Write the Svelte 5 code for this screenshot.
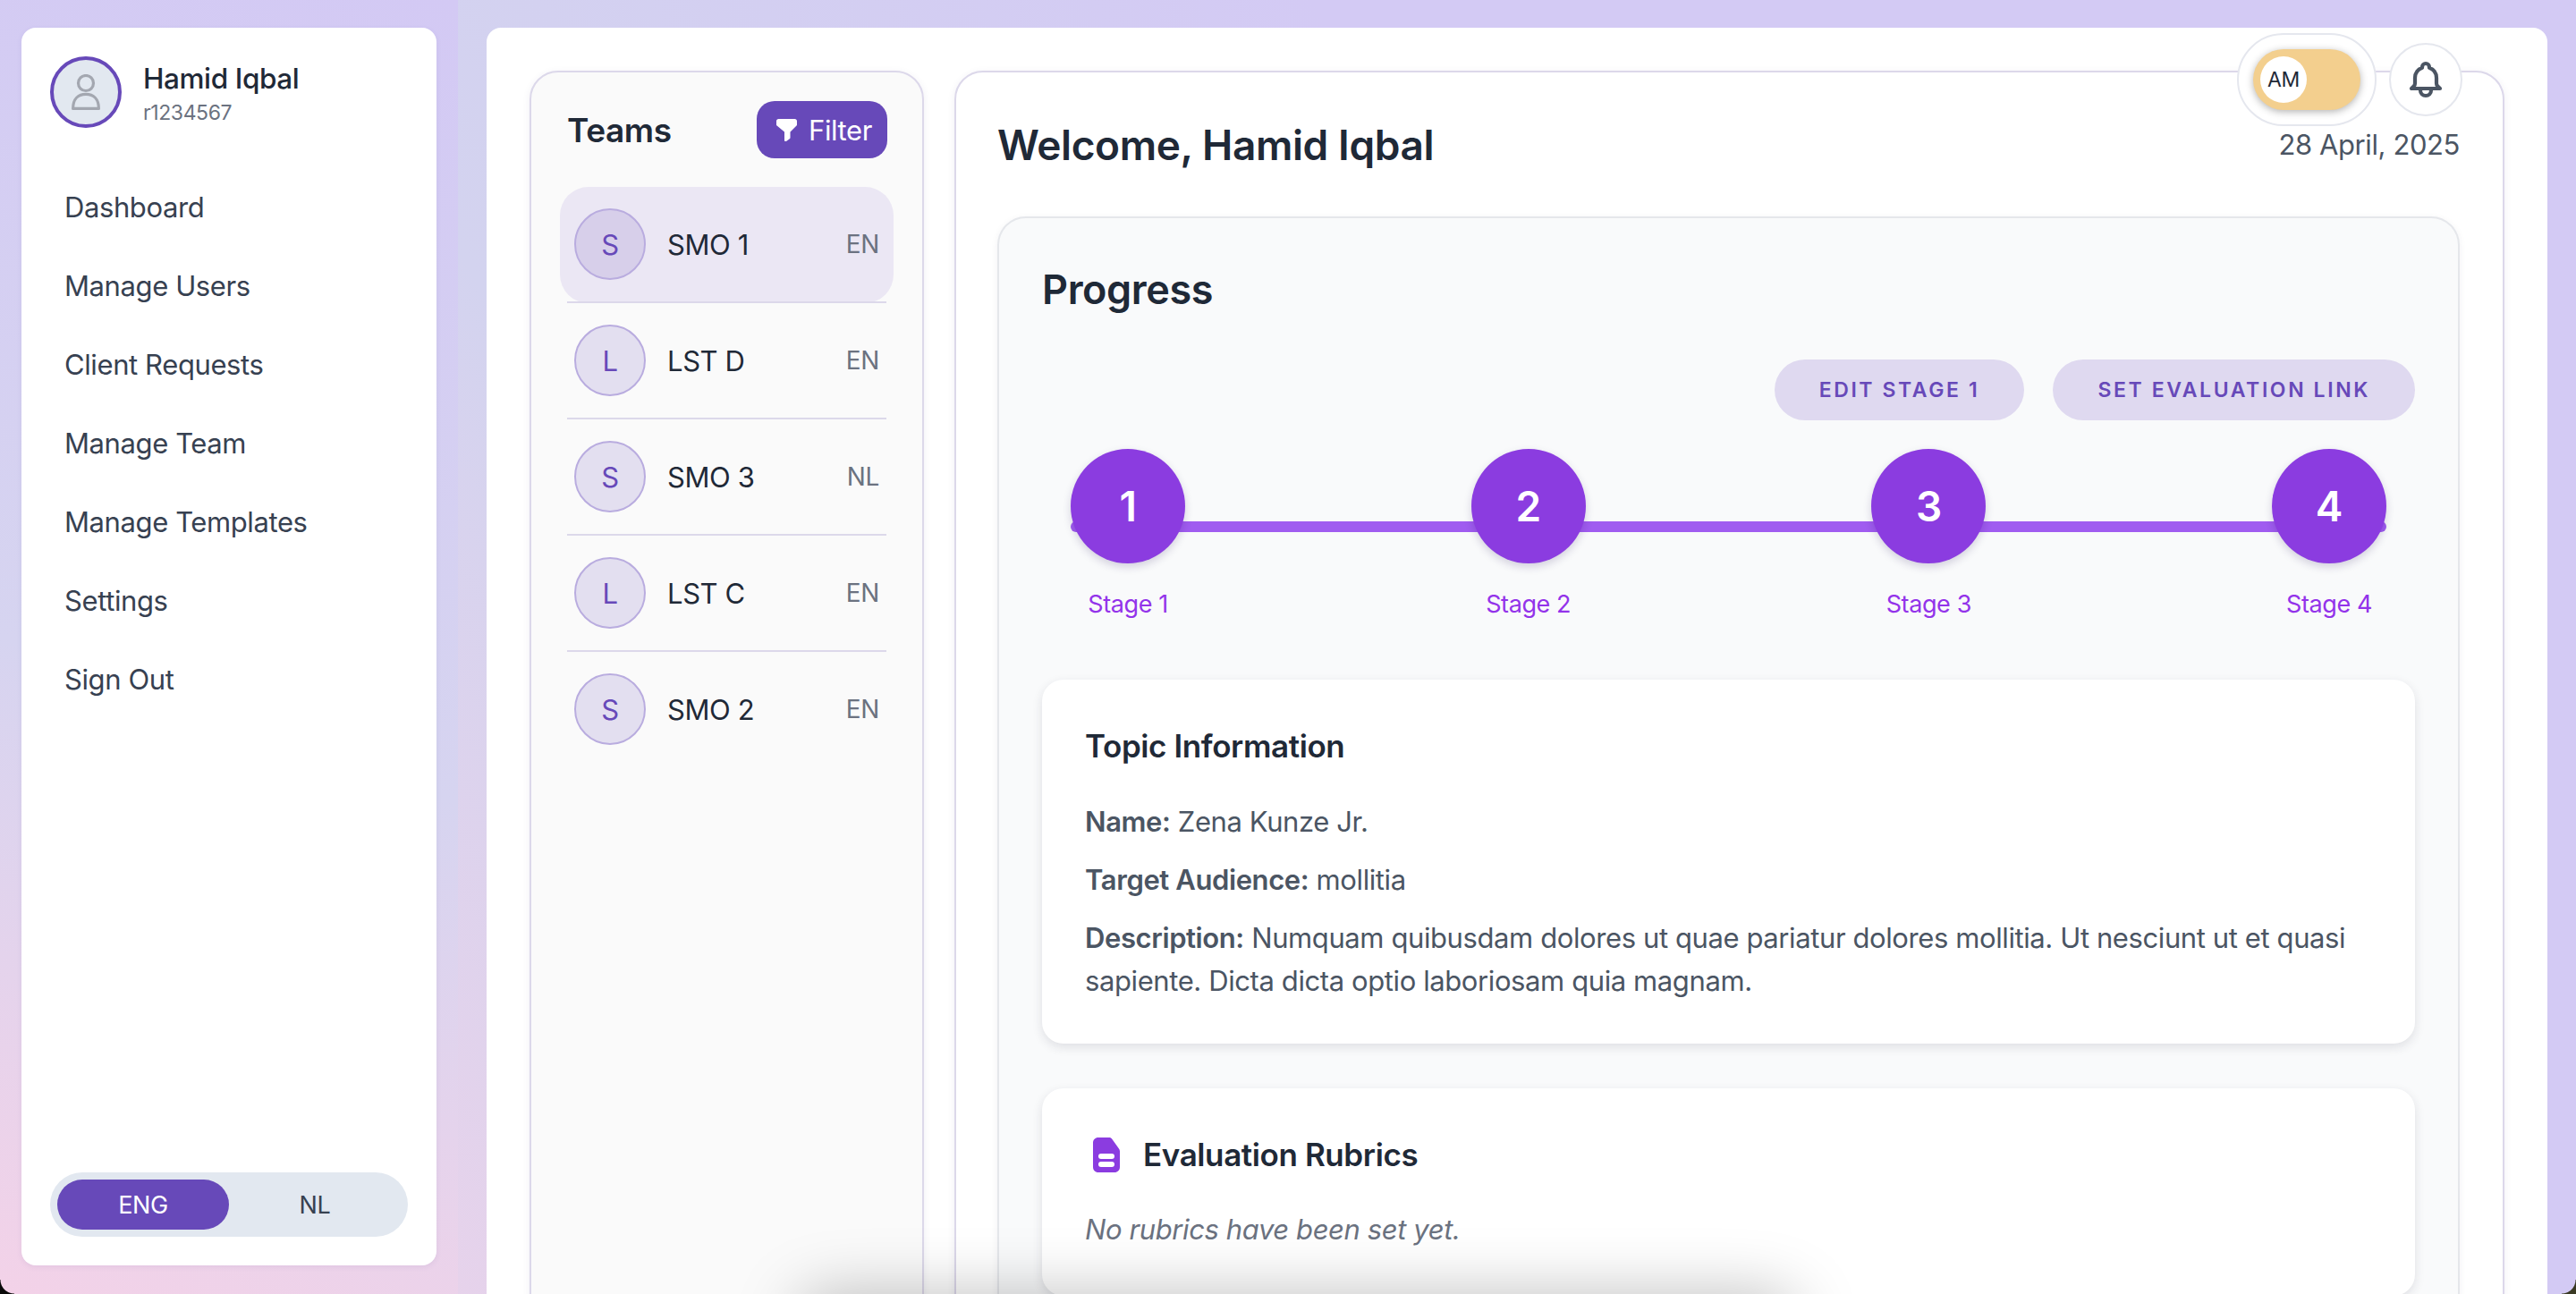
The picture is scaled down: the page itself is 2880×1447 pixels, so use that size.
<script lang="ts">
  type Team = { letter: string; name: string; lang: string; active?: boolean };

  const nav = [
    "Dashboard",
    "Manage Users",
    "Client Requests",
    "Manage Team",
    "Manage Templates",
    "Settings",
    "Sign Out",
  ];

  const teams: Team[] = [
    { letter: "S", name: "SMO 1", lang: "EN", active: true },
    { letter: "L", name: "LST D", lang: "EN" },
    { letter: "S", name: "SMO 3", lang: "NL" },
    { letter: "L", name: "LST C", lang: "EN" },
    { letter: "S", name: "SMO 2", lang: "EN" },
  ];

  const stages = [1, 2, 3, 4];
</script>

<div class="page">
  <aside class="rail">
    <div class="side-card">
      <div class="profile">
        <div class="avatar">
          <svg width="32" height="40" viewBox="0 0 32 40" fill="none" stroke="#a3a7b0" stroke-width="3.2">
            <circle cx="16" cy="10" r="8.500" />
            <path d="M1.600 38.400c0-11 6-16 14.400-16s14.400 5 14.400 16z" stroke-linejoin="round" />
          </svg>
        </div>
        <div class="ident">
          <div class="who">Hamid Iqbal</div>
          <div class="rnum">r1234567</div>
        </div>
      </div>
      <nav>
        {#each nav as item}
          <a href="#top">{item}</a>
        {/each}
      </nav>
      <div class="lang">
        <button class="on">ENG</button>
        <button>NL</button>
      </div>
    </div>
  </aside>

  <main>
    <div class="panel">
      <section class="teams">
        <header>
          <h2>Teams</h2>
          <button class="filter">
            <svg width="23" height="25" viewBox="0 0 23 25" fill="#fff">
              <path d="M0 2.500C0 1 1 0 2.500 0h18C22 0 23 1 23 2.500V7l-7.500 7.500v6.500c0 .6-.3 1-.7 1.300L11 25c-1 .6-2 0-2-1.200v-9.300L0 7z" />
            </svg>
            Filter
          </button>
        </header>
        <ul>
          {#each teams as team}
            <li class:active={team.active}>
              <span class="badge">{team.letter}</span>
              <span class="tname">{team.name}</span>
              <span class="tlang">{team.lang}</span>
            </li>
          {/each}
        </ul>
      </section>

      <section class="welcome">
        <div class="head">
          <h1>Welcome, Hamid Iqbal</h1>
          <div class="date">28 April, 2025</div>
        </div>

        <div class="progress">
          <h2>Progress</h2>
          <div class="actions">
            <button>EDIT STAGE 1</button>
            <button>SET EVALUATION LINK</button>
          </div>
          <div class="stages">
            {#each stages as n}
              <div class="stage">
                <span class="dot">{n}</span>
                <span class="label">Stage {n}</span>
              </div>
            {/each}
          </div>

          <div class="card topic">
            <h3>Topic Information</h3>
            <p class="first"><b>Name:</b> Zena Kunze Jr.</p>
            <p><b>Target Audience:</b> mollitia</p>
            <p><b>Description:</b> Numquam quibusdam dolores ut quae pariatur dolores mollitia. Ut nesciunt ut et quasi sapiente. Dicta dicta optio laboriosam quia magnam.</p>
          </div>

          <div class="card rubrics">
            <h3>
              <svg width="30" height="39" viewBox="0 0 30 39">
                <path fill="#8b3ce0" d="M6 0h12c1.500 0 2.500.6 3.300 1.700l7.500 10.500c.8 1 1.200 2 1.200 3.300V33c0 3.500-2.500 6-6 6H6c-3.500 0-6-2.500-6-6V6c0-3.500 2.500-6 6-6z" />
                <rect x="6" y="18" width="18" height="6" rx="3" fill="#fff" />
                <rect x="6" y="27" width="18" height="6" rx="3" fill="#fff" />
              </svg>
              Evaluation Rubrics
            </h3>
            <p class="none">No rubrics have been set yet.</p>
          </div>
        </div>
      </section>

      <div class="top-tools">
        <div class="ring">
          <div class="switch"><span class="knob">AM</span></div>
        </div>
        <button class="bell" aria-label="Notifications">
          <svg width="48" height="48" viewBox="0 0 24 24" fill="none" stroke="#4b5563" stroke-width="2.100" stroke-linecap="round" stroke-linejoin="round">
            <path d="M15 17h5l-1.405-1.405A2.032 2.032 0 0 1 18 14.158V11a6.002 6.002 0 0 0-4-5.659V5a2 2 0 1 0-4 0v.341C7.670 6.165 6 8.388 6 11v3.159c0 .538-.214 1.055-.595 1.436L4 17h5m6 0v1a3 3 0 1 1-6 0v-1m6 0H9" />
          </svg>
        </button>
      </div>
    </div>
  </main>

  <div class="dock-shadow"></div>
  <div class="corner left"></div>
  <div class="corner right"></div>
</div>

<style>
  :global(body) {
    margin: 0;
    background: #000;
  }

  .page {
    position: relative;
    display: flex;
    width: 2880px;
    height: 1447px;
    overflow: hidden;
    background: linear-gradient(60deg, #f5d2e8 0%, #d3d3ef 32%, #d3caf4 62%);
    font-family: Inter, "Liberation Sans", sans-serif;
    letter-spacing: -0.4px;
    color: #1f2937;
  }

  button {
    font: inherit;
    letter-spacing: inherit;
    border: 0;
    cursor: pointer;
  }

  h1, h2, h3, p, ul {
    margin: 0;
    padding: 0;
  }

  .rail {
    box-sizing: border-box;
    flex: none;
    width: 512px;
    height: 100%;
    padding: 31px 24px 32px;
    background: linear-gradient(20deg, #f3d2e8 0%, #d6d4f0 45%, #d3c9f4 100%);
  }

  .side-card {
    box-sizing: border-box;
    display: flex;
    flex-direction: column;
    height: 100%;
    padding: 32px;
    background: #fff;
    border-radius: 16px;
    box-shadow: 0 2px 6px rgba(80, 60, 140, 0.08);
  }

  .profile {
    display: flex;
    align-items: center;
    gap: 24px;
  }

  .avatar {
    box-sizing: border-box;
    display: flex;
    align-items: center;
    justify-content: center;
    width: 80px;
    height: 80px;
    border: 4px solid #6749b9;
    border-radius: 50%;
    background: #e2e8f0;
  }

  .ident {
    padding-top: 3px;
  }

  .who {
    font-size: 31.500px;
    line-height: 40px;
    font-weight: 500;
  }

  .rnum {
    font-size: 23px;
    line-height: 32px;
    color: #6b7280;
    margin-top: 2px;
  }

  nav {
    display: flex;
    flex-direction: column;
    flex: 1;
    margin-top: 45px;
  }

  nav a {
    padding: 0 16px;
    height: 88px;
    line-height: 88px;
    font-size: 31px;
    color: #374151;
    text-decoration: none;
  }

  .lang {
    box-sizing: border-box;
    display: flex;
    height: 72px;
    padding: 8px;
    background: #e2e8f0;
    border-radius: 36px;
  }

  .lang button {
    flex: 1;
    background: none;
    font-size: 27px;
    color: #374151;
    border-radius: 28px;
  }

  .lang .on {
    background: #6749b9;
    color: #fff;
  }

  main {
    flex: 1;
    min-width: 0;
    padding: 31px 32px 0;
  }

  .panel {
    position: relative;
    box-sizing: border-box;
    display: flex;
    gap: 34px;
    height: 1500px;
    padding: 48px;
    background: #fff;
    border-radius: 16px 16px 0 0;
  }

  .teams {
    box-sizing: border-box;
    flex: none;
    width: 441px;
    padding: 32px;
    background: #fafafa;
    border: 2px solid #dcd8ea;
    border-radius: 32px;
    box-shadow: 0 2px 8px rgba(60, 50, 110, 0.08);
  }

  .teams header {
    display: flex;
    align-items: center;
    justify-content: space-between;
    height: 64px;
    margin-bottom: 32px;
    padding: 0 7px 0 8px;
  }

  .teams h2 {
    font-size: 37px;
    font-weight: 600;
  }

  .filter {
    display: flex;
    align-items: center;
    gap: 13px;
    height: 64px;
    padding: 0 17px 0 22px;
    background: #6749b9;
    color: #fff;
    font-size: 31px;
    border-radius: 20px;
  }

  ul {
    list-style: none;
  }

  li {
    position: relative;
    box-sizing: border-box;
    display: flex;
    align-items: center;
    height: 130px;
    padding: 0 16px 2px 16px;
  }

  li::after {
    content: "";
    position: absolute;
    left: 8px;
    right: 8px;
    bottom: 0;
    height: 2px;
    background: #dcd8ea;
  }

  li:last-child::after {
    display: none;
  }

  li.active {
    background: #ebe7f4;
    border-radius: 32px;
  }

  .badge {
    box-sizing: border-box;
    display: flex;
    align-items: center;
    justify-content: center;
    width: 80px;
    height: 80px;
    background: #e3dff0;
    border: 2px solid #b9acdf;
    border-radius: 50%;
    color: #6749b9;
    font-size: 31px;
  }

  li.active .badge {
    background: #d7cfea;
  }

  .tname {
    flex: 1;
    margin-left: 24px;
    font-size: 31px;
  }

  .tlang {
    font-size: 28px;
    color: #6b7280;
  }

  .welcome {
    box-sizing: border-box;
    flex: 1;
    min-width: 0;
    padding: 46px 48px 46px 46px;
    background: #fff;
    border: 2px solid #dcd8ea;
    border-radius: 32px;
    box-shadow: 0 2px 8px rgba(60, 50, 110, 0.08);
  }

  .head {
    display: flex;
    align-items: center;
    justify-content: space-between;
    height: 69px;
    margin-bottom: 46px;
  }

  h1 {
    font-size: 46px;
    line-height: 64px;
    font-weight: 600;
  }

  .progress h2 {
    font-size: 45px;
    line-height: 64px;
    font-weight: 600;
  }

  .date {
    font-size: 31px;
    color: #4b5563;
  }

  .progress {
    padding: 48px;
    background: #f9fafb;
    border: 2px solid #e5e7eb;
    border-radius: 32px;
    box-shadow: 0 2px 8px rgba(30, 30, 60, 0.06);
  }

  .actions {
    display: flex;
    justify-content: flex-end;
    gap: 32px;
    margin-top: 46px;
  }

  .actions button {
    height: 68px;
    padding: 0 50px;
    background: #dfd9f0;
    border-radius: 34px;
    color: #6749b9;
    font-size: 23px;
    font-weight: 600;
    letter-spacing: 2.600px;
  }

  .stages {
    position: relative;
    display: flex;
    justify-content: space-between;
    margin: 32px 32px 0;
  }

  .stages::before {
    content: "";
    position: absolute;
    top: 81px;
    left: 0;
    right: 0;
    height: 12px;
    background: #a05cf0;
    border-radius: 6px;
  }

  .stage {
    position: relative;
    display: flex;
    flex-direction: column;
    align-items: center;
    gap: 28px;
  }

  .dot {
    display: flex;
    align-items: center;
    justify-content: center;
    width: 128px;
    height: 128px;
    border-radius: 50%;
    background: #8b3ce0;
    color: #fff;
    font-size: 46px;
    font-weight: 600;
    box-shadow: 0 4px 10px rgba(40, 20, 90, 0.18);
  }

  .label {
    font-size: 27px;
    line-height: 36px;
    color: #9333ea;
  }

  .card {
    box-sizing: border-box;
    padding: 50px 48px 46px;
    background: #fff;
    border-radius: 24px;
    box-shadow: 0 4px 12px rgba(30, 30, 60, 0.12);
  }

  .topic {
    margin-top: 66px;
  }

  .rubrics {
    height: 232px;
    margin-top: 50px;
  }

  .card h3 {
    display: flex;
    align-items: center;
    gap: 26px;
    font-size: 35px;
    line-height: 48px;
    font-weight: 600;
  }

  .rubrics h3 svg {
    margin-left: 9px;
  }

  .card p {
    font-size: 31px;
    line-height: 48px;
    color: #4b5563;
    margin-top: 17px;
  }

  .card p.first {
    margin-top: 37px;
  }

  .card b {
    font-weight: 600;
  }

  .card p.none {
    font-style: italic;
    color: #6b7280;
    margin-top: 36px;
  }

  .top-tools {
    position: absolute;
    top: 6px;
    right: 95px;
    display: flex;
    align-items: center;
    gap: 14px;
  }

  .ring {
    box-sizing: border-box;
    padding: 16px;
    background: #fff;
    border: 2px solid #e5e7ee;
    border-radius: 52px;
  }

  .switch {
    box-sizing: border-box;
    display: flex;
    align-items: center;
    width: 120px;
    height: 68px;
    padding: 0 8px;
    background: #f3cf8e;
    border-radius: 34px;
    box-shadow: 0 2px 8px rgba(0, 0, 0, 0.3);
  }

  .knob {
    display: flex;
    align-items: center;
    justify-content: center;
    width: 52px;
    height: 52px;
    background: #fff;
    border-radius: 50%;
    font-size: 23px;
  }

  .bell {
    box-sizing: border-box;
    display: flex;
    align-items: center;
    justify-content: center;
    width: 82px;
    height: 82px;
    padding: 0;
    background: #fff;
    border: 2px solid #e5e7ee;
    border-radius: 50%;
  }

  .dock-shadow {
    position: absolute;
    left: 900px;
    bottom: -60px;
    width: 1100px;
    height: 50px;
    border-radius: 30px;
    box-shadow: 0 0 70px 10px rgba(0, 0, 0, 0.26);
  }

  .corner {
    position: absolute;
    bottom: 0;
    width: 16px;
    height: 16px;
  }

  .corner.left {
    left: 0;
    background: radial-gradient(circle at 100% 0, transparent 15px, #0a0a0a 16px);
  }

  .corner.right {
    right: 0;
    background: radial-gradient(circle at 0 0, transparent 15px, #3a3a24 16px);
  }
</style>
